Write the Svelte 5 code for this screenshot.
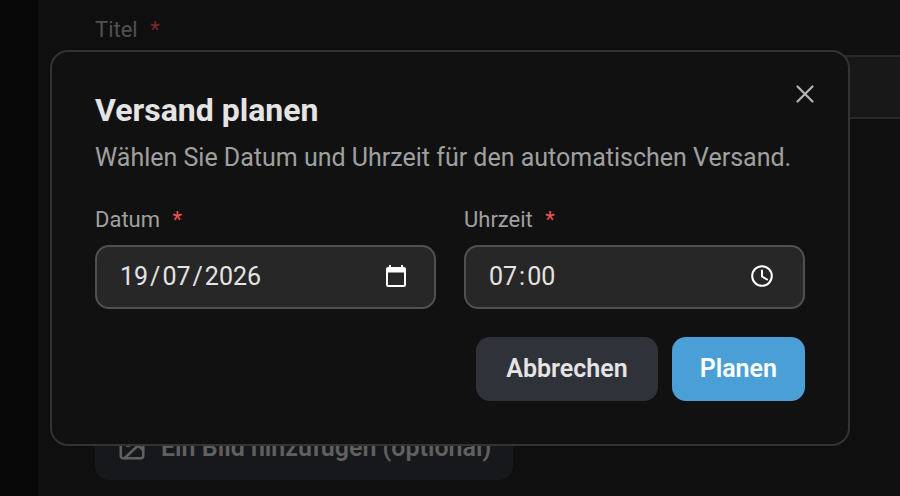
<!-- ScheduleDialog.svelte -->
<script lang="ts">
  let open = $state(true);
  let title = $state('');

  let day = $state('19');
  let month = $state('07');
  let year = $state('2026');
  let hour = $state('07');
  let minute = $state('00');

  function close() {
    open = false;
  }

  function submit(event: SubmitEvent) {
    event.preventDefault();
    close();
  }
</script>

<div class="page">
  <aside class="rail"></aside>
  <main class="editor">
    <div class="field">
      <label for="title">Titel <span class="required">*</span></label>
      <div class="control">
        <input id="title" class="title-input" type="text" bind:value={title} />
      </div>
    </div>
    <button class="add-image" type="button" onclick={() => (open = true)}>
      <svg viewBox="0 0 24 24" width="30" height="30" aria-hidden="true">
        <rect x="3" y="3" width="18" height="18" rx="2" />
        <circle cx="9" cy="9" r="2" />
        <path d="M6 21 15.6 12a2 2 0 0 1 2.8 0L21 14.6" />
      </svg>
      Ein Bild hinzufügen (optional)
    </button>
  </main>
</div>

{#if open}
  <div class="overlay">
    <div class="dialog" role="dialog" aria-modal="true" aria-labelledby="dialog-title">
      <button class="close-btn" type="button" aria-label="Schließen" onclick={close}>
        <svg viewBox="0 0 24 24" width="30" height="30" aria-hidden="true">
          <path d="M18 6 6 18M6 6l12 12" />
        </svg>
      </button>

      <h2 id="dialog-title">Versand planen</h2>
      <p>Wählen Sie Datum und Uhrzeit für den automatischen Versand.</p>

      <form onsubmit={submit}>
        <div class="columns">
          <div class="field">
            <label for="day">Datum <span class="required">*</span></label>
            <div class="control date">
              <input id="day" class="segment" inputmode="numeric" maxlength="2" required bind:value={day} />
              <span>/</span>
              <input class="segment" aria-label="Monat" inputmode="numeric" maxlength="2" required bind:value={month} />
              <span>/</span>
              <input class="segment year" aria-label="Jahr" inputmode="numeric" maxlength="4" required bind:value={year} />
              <button class="picker" type="button" aria-label="Datum auswählen">
                <svg viewBox="0 0 22 22" width="22" height="22" aria-hidden="true">
                  <path
                    fill-rule="evenodd"
                    d="M4 0h2v2h10V0h2v2h1a2 2 0 0 1 2 2v16a2 2 0 0 1-2 2H3a2 2 0 0 1-2-2V4a2 2 0 0 1 2-2h1zM3 7.5V20h16V7.5z"
                  />
                </svg>
              </button>
            </div>
          </div>

          <div class="field">
            <label for="hour">Uhrzeit <span class="required">*</span></label>
            <div class="control">
              <input id="hour" class="segment" inputmode="numeric" maxlength="2" required bind:value={hour} />
              <span>:</span>
              <input class="segment" aria-label="Minute" inputmode="numeric" maxlength="2" required bind:value={minute} />
              <button class="picker" type="button" aria-label="Uhrzeit auswählen">
                <svg class="clock" viewBox="0 0 22 22" width="22" height="22" aria-hidden="true">
                  <circle cx="11" cy="11" r="9.8" />
                  <path d="M11 5.5v6l5 3" />
                </svg>
              </button>
            </div>
          </div>
        </div>

        <div class="actions">
          <button class="btn cancel" type="button" onclick={close}>Abbrechen</button>
          <button class="btn submit" type="submit">Planen</button>
        </div>
      </form>
    </div>
  </div>
{/if}

<style>
  :global(body) {
    margin: 0;
    background: #1e1e1e;
    font-family: Roboto, 'Liberation Sans', sans-serif;
    color: #e4e4e4;
  }

  button,
  input {
    font: inherit;
    color: inherit;
    border: none;
    background: none;
    padding: 0;
    box-sizing: border-box;
  }

  button {
    cursor: pointer;
  }

  svg {
    display: block;
    flex: none;
  }

  /* Page behind the dialog */
  .page {
    display: flex;
    height: 100vh;
    overflow: hidden;
  }

  .rail {
    flex: none;
    width: 38px;
    background: #101010;
  }

  .editor {
    flex: none;
    width: 100%;
    box-sizing: border-box;
    display: flex;
    flex-direction: column;
    justify-content: space-between;
    align-items: flex-start;
    padding: 17px 0 16px 57px;
  }

  .editor .field {
    width: 100%;
  }

  .title-input {
    width: 100%;
  }

  .add-image {
    display: flex;
    align-items: center;
    gap: 14px;
    height: 64px;
    padding: 0 22px 2px;
    border-radius: 14px;
    background: #2c3036;
    color: #c0c0c0;
    font-size: 25px;
    font-weight: 600;
  }

  .add-image svg,
  .close-btn svg,
  .clock {
    fill: none;
    stroke: currentColor;
    stroke-width: 2;
    stroke-linecap: round;
    stroke-linejoin: round;
  }

  /* Form fields */
  .field {
    display: flex;
    flex-direction: column;
    gap: 12px;
  }

  label {
    font-size: 22px;
    line-height: 26px;
    color: #a0a0a0;
  }

  .required {
    margin-left: 7px;
    color: #f05252;
  }

  .control {
    display: flex;
    align-items: center;
    height: 64px;
    box-sizing: border-box;
    padding: 0 30px 2px 21px;
    border: 2px solid #505050;
    border-radius: 14px;
    background: #272727;
    font-size: 25px;
  }

  .control.date {
    padding-right: 27px;
  }

  .editor .control {
    background: #303030;
    border-color: #545454;
  }

  .segment {
    width: calc(2ch + 4px);
    padding: 0 2px;
    outline: none;
  }

  .segment.year {
    width: calc(4ch + 4px);
  }

  .picker {
    margin-left: auto;
    color: #fff;
  }

  .picker svg {
    fill: currentColor;
  }

  .picker .clock {
    fill: none;
  }

  /* Dialog */
  .overlay {
    position: fixed;
    inset: 0;
    display: flex;
    align-items: center;
    justify-content: center;
    padding: 0 50px;
    background: rgba(0, 0, 0, 0.5);
  }

  .dialog {
    position: relative;
    flex: 1;
    padding: 43px;
    border: 2px solid #333;
    border-radius: 18px;
    background: #111;
  }

  .close-btn {
    position: absolute;
    top: 27px;
    right: 28px;
    color: #b4b4b4;
  }

  .close-btn svg {
    stroke-width: 1.8;
  }

  h2 {
    margin: 0 0 16px;
    font-size: 32px;
    line-height: 30px;
    font-weight: 700;
  }

  p {
    margin: 0 0 32px;
    font-size: 25px;
    line-height: 34px;
    color: #a0a0a0;
  }

  .columns {
    display: grid;
    grid-template-columns: 1fr 1fr;
    gap: 28px;
  }

  .actions {
    display: flex;
    justify-content: flex-end;
    gap: 14px;
    margin-top: 28px;
  }

  .btn {
    height: 64px;
    padding: 0 30px 2px;
    border-radius: 14px;
    font-size: 25px;
    font-weight: 600;
  }

  .cancel {
    background: #30323a;
  }

  .submit {
    padding: 0 28px 2px;
    background: #4a9fd6;
    color: #fff;
  }
</style>
